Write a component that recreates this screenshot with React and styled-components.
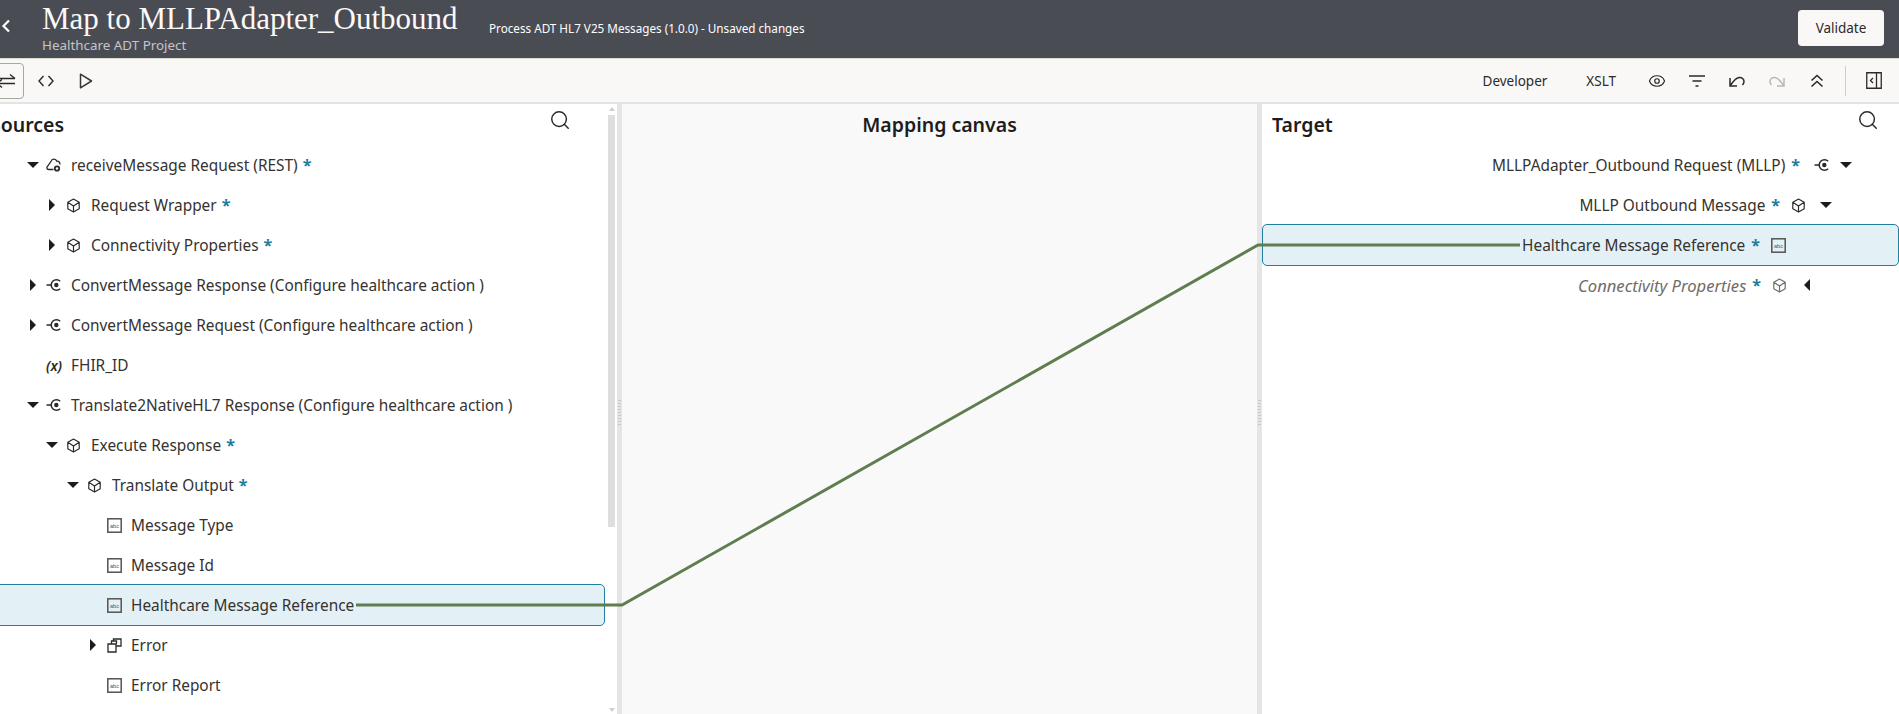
import React from "react";
import styled, { createGlobalStyle } from "styled-components";
import { Eye, Search } from "lucide-react";

const Global = createGlobalStyle`
  html, body { margin: 0; padding: 0; background: #fff; }
  body { font-family: "Noto Sans", "Liberation Sans", sans-serif; color: #2c2a28; overflow: hidden; }
`;

const Page = styled.div`
  width: 1899px; height: 714px; overflow: hidden; display: flex; flex-direction: column;
`;
const Header = styled.header`
  height: 58px; flex: none; background: #4a4c54; border-bottom: 1px solid #dcdcd0; display: flex; align-items: flex-start; color: #fff;
`;
const BackIcon = styled.svg`
  width: 10px; height: 14px; margin: 19px 0 0 1px; flex: none;
`;
const TitleBlock = styled.div`
  margin-left: 31px; width: 447px; flex: none; padding-top: 1px;
`;
const Title = styled.div`
  font-family: "Liberation Serif", serif; font-size: 31px; line-height: 36px; white-space: nowrap; color: #fbf9f8;
`;
const Subtitle = styled.div`
  font-size: 13.4px; line-height: 16px; margin-top: 0; color: #c4c5c8;
`;
const ProcessName = styled.div`
  font-size: 11.7px; line-height: 16px; margin-top: 20px; white-space: nowrap; flex: 1;
`;
const Validate = styled.button`
  width: 86px; height: 36px; margin: 10px 15px 0 0; border: 0; border-radius: 4px; background: #f9f8f6;
  font: 13.5px "Noto Sans", sans-serif; color: #2c2a28;
`;
const Toolbar = styled.div`
  flex: none; background: #f9f8f6; border-bottom: 2px solid #e4e3e1; box-sizing: border-box; height: 45px;
  display: flex; align-items: center;
`;
const ToggleButton = styled.div`
  width: 36px; height: 36px; margin-left: -12px; box-sizing: border-box; border: 1px solid #a9a7a4; border-radius: 4px;
  display: flex; align-items: center; justify-content: center; flex: none;
`;
const ToolIcon = styled.div`
  width: 40px; height: 36px; display: flex; align-items: center; justify-content: center; flex: none; margin-left: ${p => p.$ml || 0}px; color: ${p => p.$off ? "#b9b8b6" : "#2c2a28"};
`;
const ToolGap = styled.div` flex: 1; `;
const ToolText = styled.div`
  font-size: 13.5px; margin-right: ${p => p.$mr}px; white-space: nowrap;
`;
const Divider = styled.div`
  width: 1px; height: 30px; background: #cfcdca; margin: 0 20px 0 8px; flex: none;
`;
const PanelToggle = styled.div`
  width: 33px; display: flex; align-items: center; flex: none;
`;

const Workspace = styled.div`
  position: relative; flex: 1; min-height: 0; display: grid; grid-template-columns: 617px 5px 635px 5px 637px;
`;
const Splitter = styled.div`
  background: #e5e5e5; position: relative;
  &::after { content: ""; position: absolute; left: 1px; top: 296px; width: 3px; height: 26px;
    background: repeating-linear-gradient(#c8c8c8 0 1px, transparent 1px 3px); }
`;
const SourcePanel = styled.section`
  display: flex; min-width: 0; overflow: hidden;
`;
const SourceBody = styled.div`
  flex: 1; min-width: 0; margin-left: -20px; margin-right: 2px; display: flex; flex-direction: column;
`;
const PanelHead = styled.div`
  height: 41px; flex: none; display: flex; align-items: center; justify-content: space-between; padding: 0 ${p => p.$pr}px 0 10px; box-sizing: border-box;
`;
const PanelTitle = styled.h2`
  margin: 0; font-size: 19.5px; font-weight: 600; color: #1f1d1b;
`;
const SearchBtn = styled.span`
  display: flex; margin-top: -9px; color: #2c2a28;
`;
const Track = styled.div`
  width: 10px; flex: none; position: relative; padding-top: 11px;
`;
const Thumb = styled.div`
  width: 7px; height: 412px; background: #dedede; margin-left: 1px;
`;
const TrackArrow = styled.i`
  position: absolute; left: 2px; ${p => p.$up ? "top: 3px; border-bottom: 4px solid #cfcfcf;" : "bottom: 2px; border-top: 4px solid #cfcfcf;"}
  border-left: 3px solid transparent; border-right: 3px solid transparent;
`;
const Row = styled.div`
  height: 40px; flex: none; display: flex; align-items: center; font-size: ${p => p.$muted ? 16.6 : 15.4}px; white-space: nowrap; box-sizing: border-box; color: #35322f;
  font-style: ${p => p.$muted ? "italic" : "normal"};
  justify-content: ${p => p.$right ? "flex-end" : "flex-start"};
  padding: ${p => p.$right ? `0 ${p.$pad}px 0 0` : `0 0 0 ${p.$pad}px`};
`;
const SelectedRow = styled(Row)`
  height: 42px; margin: -1px 0; background: #e3f0f6; border: 1px solid #1f7f9f; border-radius: 5px; position: relative;
  ${p => p.$right ? "padding-right: " + (p.$pad - 1) + "px;" : "padding-left: " + (p.$pad - 1) + "px;"}
`;
const CaretBox = styled.span`
  width: 12px; flex: none; display: flex; justify-content: center; align-items: center;
`;
const Down = styled.i`
  border-left: 6px solid transparent; border-right: 6px solid transparent; border-top: 6px solid #1f1d1b; width: 0; height: 0;
`;
const RightCaret = styled.i`
  border-top: 6px solid transparent; border-bottom: 6px solid transparent; border-left: 6px solid #1f1d1b; width: 0; height: 0;
`;
const LeftCaret = styled.i`
  border-top: 6px solid transparent; border-bottom: 6px solid transparent; border-right: 6px solid #1f1d1b; width: 0; height: 0;
`;
const IconSlot = styled.span`
  width: 16px; height: 16px; flex: none; display: flex; align-items: center; justify-content: center; margin-left: ${p => p.$ml ?? 7}px; margin-right: ${p => p.$mr ?? 9}px; color: ${p => p.$muted ? "#6f6c69" : "#2c2a28"};
  font-size: 14px; font-style: italic; font-weight: 600;
`;
const Star = styled.span`
  color: #1d7b9c; font-weight: 700; font-size: 16px; margin: ${p => p.$right ? "0 0 0 6px" : "0 0 0 5px"}; line-height: 1; font-style: normal;
`;
const Muted = styled.span` color: #6f6c69; `;
const CanvasPanel = styled.section` background: #f9f9f9; `;
const CanvasTitle = styled.h2`
  margin: 0; font-size: 19.5px; font-weight: 600; text-align: center; color: #1f1d1b; line-height: 41px;
`;
const TargetPanel = styled.section` display: flex; flex-direction: column; min-width: 0; overflow: hidden; `;
const Wire = styled.svg`
  position: absolute; inset: 0; width: 100%; height: 100%; pointer-events: none;
`;

const S = { fill: "none", stroke: "currentColor" };
const FnIcon = () => (
  <svg width="16" height="14" viewBox="0 0 16 14"><path d="M14.200 3.200A5.300 5.300 0 1 0 14.200 10.800" {...S} strokeWidth="1.500"/><path d="M.5 7h5" {...S} strokeWidth="1.500"/><circle cx="10.300" cy="7" r="2.200" fill="currentColor"/></svg>
);
const CubeIcon = () => (
  <svg width="15" height="15" viewBox="0 0 15 15"><path d="M7.5 1 13.200 4.200V10.800L7.5 14 1.800 10.800V4.200Z M1.800 4.200 7.5 8 13.200 4.200 M7.5 8V14" {...S} strokeWidth="1.200" strokeLinejoin="round"/></svg>
);
const AbcIcon = () => (
  <svg width="15" height="15" viewBox="0 0 15 15"><rect x=".8" y=".8" width="13.400" height="13.400" {...S} stroke="#55534f" strokeWidth="1.500"/><text x="7.5" y="9.500" fontSize="6" textLength="9" lengthAdjust="spacingAndGlyphs" textAnchor="middle" fontFamily="Liberation Sans" fill="#55534f" fontStyle="normal" fontWeight="400">abc</text></svg>
);
const CloudIcon = () => (
  <svg width="16" height="16" viewBox="0 0 16 16"><path d="M7.500 12.500H2.500A1.800 1.800 0 0 1 1.600 9.300L5.200 4A3 3 0 0 1 10.800 4.200 2.700 2.700 0 0 1 13.800 7.500" {...S} strokeWidth="1.300"/><circle cx="11" cy="11.500" r="2.200" {...S} strokeWidth="1.800"/></svg>
);
const ErrIcon = () => (
  <svg width="15" height="15" viewBox="0 0 15 15"><path d="M1 6h8v8H1z M4.500 6V3h5v3 M6.500 3V1h7.500v7H9" {...S} strokeWidth="1.300"/></svg>
);

const sourceRows = [
  { pad: 47, open: true, icon: "cloud", label: "receiveMessage Request (REST)", star: true, mr: 9 },
  { pad: 66, closed: true, icon: "cube", label: "Request Wrapper", star: true, mr: 10 },
  { pad: 66, closed: true, icon: "cube", label: "Connectivity Properties", star: true, mr: 10 },
  { pad: 47, closed: true, icon: "fn", label: "ConvertMessage Response (Configure healthcare action )", mr: 9 },
  { pad: 47, closed: true, icon: "fn", label: "ConvertMessage Request (Configure healthcare action )", mr: 9 },
  { pad: 47, icon: "var", label: "FHIR_ID", mr: 9 },
  { pad: 47, open: true, icon: "fn", label: "Translate2NativeHL7 Response (Configure healthcare action )", mr: 9 },
  { pad: 66, open: true, icon: "cube", label: "Execute Response", star: true, mr: 10 },
  { pad: 87, open: true, icon: "cube", label: "Translate Output", star: true, mr: 10 },
  { pad: 107, icon: "abc", label: "Message Type", mr: 9 },
  { pad: 107, icon: "abc", label: "Message Id", mr: 9 },
  { pad: 107, icon: "abc", label: "Healthcare Message Reference", selected: true, mr: 9 },
  { pad: 107, closed: true, icon: "err", label: "Error", mr: 9 },
  { pad: 107, icon: "abc", label: "Error Report", mr: 9 },
];

const glyph = k => ({
  cloud: <CloudIcon />, cube: <CubeIcon />, fn: <FnIcon />, abc: <AbcIcon />, err: <ErrIcon />,
  var: <span>(x)</span>,
}[k]);

function SourceRow({ r }) {
  const R = r.selected ? SelectedRow : Row;
  return (
    <R $pad={r.pad}>
      <CaretBox>{r.open && <Down />}{r.closed && <RightCaret />}</CaretBox>
      <IconSlot $mr={r.mr}>{glyph(r.icon)}</IconSlot>
      {r.label}
      {r.star && <Star>*</Star>}
    </R>
  );
}

export default function App() {
  return (
    <Page>
      <Global />
      <Header>
        <BackIcon viewBox="0 0 10 14"><path d="M8 1.500 2.500 7 8 12.500" fill="none" stroke="#fff" strokeWidth="2.200"/></BackIcon>
        <TitleBlock>
          <Title>Map to MLLPAdapter_Outbound</Title>
          <Subtitle>Healthcare ADT Project</Subtitle>
        </TitleBlock>
        <ProcessName>Process ADT HL7 V25 Messages (1.0.0) - Unsaved changes</ProcessName>
        <Validate>Validate</Validate>
      </Header>
      <Toolbar>
        <ToggleButton>
          <svg width="22" height="18" viewBox="0 0 22 18"><path d="M2 6.500h18M15 2.500l5 4M20 11.500H2M7 7.500 2 11.500M7 15.500 2 11.500" fill="none" stroke="#2c2a28" strokeWidth="1.400"/></svg>
        </ToggleButton>
        <ToolIcon $ml={2}>
          <svg width="16" height="12" viewBox="0 0 16 12"><path d="M5.500 1 1 6l4.500 5M10.500 1 15 6l-4.500 5" fill="none" stroke="#2c2a28" strokeWidth="1.400"/></svg>
        </ToolIcon>
        <ToolIcon>
          <svg width="14" height="16" viewBox="0 0 14 16"><path d="M1.500 1.200 12.500 8 1.500 14.800Z" fill="none" stroke="#3a3836" strokeWidth="1.500" strokeLinejoin="round"/></svg>
        </ToolIcon>
        <ToolGap />
        <ToolText $mr={39}>Developer</ToolText>
        <ToolText $mr={21}>XSLT</ToolText>
        <ToolIcon><Eye size={18} strokeWidth={1.6} /></ToolIcon>
        <ToolIcon>
          <svg width="18" height="14" viewBox="0 0 18 14"><path d="M1 2h16M4.500 7h9M7.500 12h3" fill="none" stroke="#2c2a28" strokeWidth="1.500"/></svg>
        </ToolIcon>
        <ToolIcon>
          <svg width="18" height="14" viewBox="0 0 18 14"><path d="M2 4v8h7M2 12C5 7.500 8 4 11 3.500c3-.5 5 2 5 4 0 1.500-.7 2.500-1.500 3.500" fill="none" stroke="#2c2a28" strokeWidth="1.500"/></svg>
        </ToolIcon>
        <ToolIcon $off>
          <svg width="18" height="14" viewBox="0 0 18 14"><path d="M16 4v8H9M16 12C13 7.500 10 4 7 3.500c-3-.5-5 2-5 4 0 1.500.7 2.500 1.500 3.500" fill="none" stroke="currentColor" strokeWidth="1.500"/></svg>
        </ToolIcon>
        <ToolIcon>
          <svg width="14" height="14" viewBox="0 0 14 14"><path d="M1.500 6.500 7 1.500l5.500 5M1.500 12.500 7 7.500l5.500 5" fill="none" stroke="#2c2a28" strokeWidth="1.600"/></svg>
        </ToolIcon>
        <Divider />
        <PanelToggle>
          <svg width="16" height="17" viewBox="0 0 16 17"><path d="M.75.75h14.500v15.500H.75zM10.500.75v15.500M7 6 4.500 8.500 7 11" fill="none" stroke="#2c2a28" strokeWidth="1.300"/></svg>
        </PanelToggle>
      </Toolbar>
      <Workspace>
        <SourcePanel>
          <SourceBody>
            <PanelHead $pr={34}>
              <PanelTitle>Sources</PanelTitle>
              <SearchBtn><Search size={22} strokeWidth={1.6} /></SearchBtn>
            </PanelHead>
            {sourceRows.map(r => <SourceRow key={r.label} r={r} />)}
          </SourceBody>
          <Track>
            <TrackArrow $up />
            <Thumb />
            <TrackArrow />
          </Track>
        </SourcePanel>
        <Splitter />
        <CanvasPanel><CanvasTitle>Mapping canvas</CanvasTitle></CanvasPanel>
        <Splitter />
        <TargetPanel>
          <PanelHead $pr={20}>
            <PanelTitle>Target</PanelTitle>
            <SearchBtn><Search size={22} strokeWidth={1.6} /></SearchBtn>
          </PanelHead>
          <Row $right $pad={47}>
            MLLPAdapter_Outbound Request (MLLP)<Star $right>*</Star>
            <IconSlot $ml={14} $mr={10}><FnIcon /></IconSlot>
            <CaretBox><Down /></CaretBox>
          </Row>
          <Row $right $pad={67}>
            MLLP Outbound Message<Star $right>*</Star>
            <IconSlot $ml={10} $mr={14}><CubeIcon /></IconSlot>
            <CaretBox><Down /></CaretBox>
          </Row>
          <SelectedRow $right $pad={113}>
            Healthcare Message Reference<Star $right>*</Star>
            <IconSlot $ml={10} $mr={0}><AbcIcon /></IconSlot>
          </SelectedRow>
          <Row $right $muted $pad={86}>
            <Muted>Connectivity Properties</Muted><Star $right>*</Star>
            <IconSlot $ml={10} $mr={14} $muted><CubeIcon /></IconSlot>
            <CaretBox><LeftCaret /></CaretBox>
          </Row>
        </TargetPanel>
        <Wire viewBox="0 0 1899 610">
          <path d="M356 501H622L1258 141H1520" fill="none" stroke="#5f7d4f" strokeWidth="3" />
        </Wire>
      </Workspace>
    </Page>
  );
}
